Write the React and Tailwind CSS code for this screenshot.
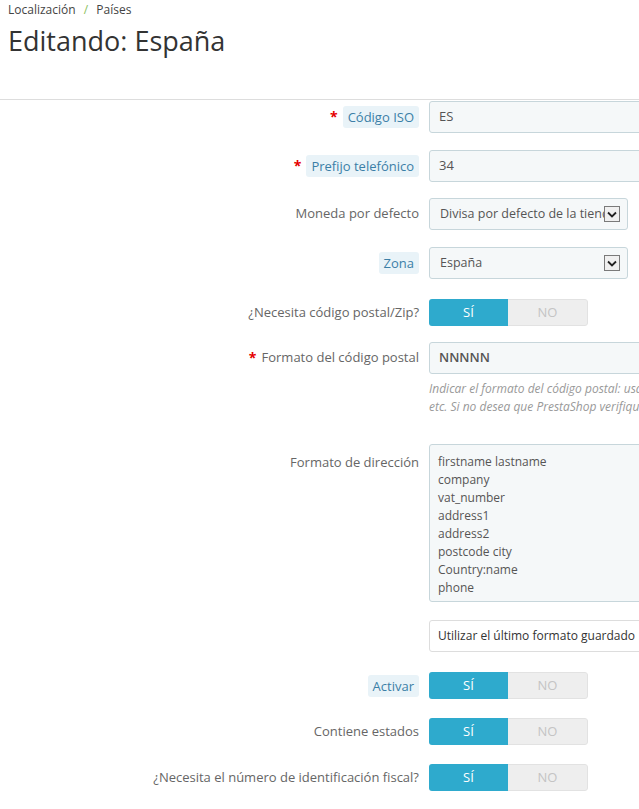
import { Fragment } from "react";

const font = { fontFamily: '"Open Sans", "Noto Sans", sans-serif' };

function Label({ children, required, tip }) {
    return (
        <div className="w-[419px] shrink-0 flex items-center justify-end text-[13px] text-[#666] pr-0">
            {required && <span className="text-[#e50000] mr-[5px] text-[14px] font-bold leading-none">*</span>}
            {tip ? (
                <span className="bg-[#e9f3f8] text-[#3b7fa7] px-[5px] py-[2px] rounded-[3px] leading-[18px]">{children}</span>
            ) : (
                <span>{children}</span>
            )}
        </div>
    );
}

function Row({ children, className }) {
    return <div className={"flex " + (className || "")}>{children}</div>;
}

function TextInput({ value, bold }) {
    return (
        <div className="ml-[10px] h-[32px] flex-1 -mr-[30px] bg-[#f5f8f9] border border-[#c7d6db] rounded-[3px] flex items-center px-[9px] text-[13px] text-[#555]">
            <span className={bold ? "font-semibold" : ""}>{value}</span>
        </div>
    );
}

function SelectBox({ value }) {
    return (
        <div className="ml-[10px] h-[32px] w-[199px] bg-[#f5f8f9] border border-[#c7d6db] rounded-[3px] flex items-center pl-[10px] pr-[7px] text-[12.5px] text-[#555]">
            <span className="flex-1 overflow-hidden whitespace-nowrap">{value}</span>
            <span className="w-[16px] h-[16px] shrink-0 border border-[#7a7a7a] bg-[#f0f0f0] flex items-center justify-center">
                <svg width="10" height="7" viewBox="0 0 10 7">
                    <path d="M1 1.5 L5 5.5 L9 1.5" fill="none" stroke="#222" strokeWidth="1.8" />
                </svg>
            </span>
        </div>
    );
}

function Toggle() {
    return (
        <div className="ml-[10px] h-[27px] w-[159px] flex rounded-[3px] overflow-hidden text-[13px]">
            <div className="w-[79px] bg-[#2eaacd] text-white flex items-center justify-center">SÍ</div>
            <div className="flex-1 bg-[#eeeeee] text-[#c4c4c4] flex items-center justify-center border-y border-r border-[#e2e2e2] rounded-r-[3px]">NO</div>
        </div>
    );
}

const addressLines = [
    "firstname lastname",
    "company",
    "vat_number",
    "address1",
    "address2",
    "postcode city",
    "Country:name",
    "phone",
];

export default function App() {
    return (
        <div className="w-[639px] h-[809px] overflow-hidden bg-white" style={font}>
            {/* Header */}
            <div className="px-[8px] pt-[1px]">
                <div className="text-[12px] text-[#444] leading-[18px]">
                    Localización <span className="text-[#8bbf5c] mx-[5px]">/</span> Países
                </div>
                <h1 className="text-[27px] text-[#333] leading-[36px] mt-[4px]">Editando: España</h1>
            </div>
            <div className="mt-[40px] border-t border-[#dddddd]" />

            {/* Form */}
            <div className="flex flex-col">
                <Row className="mt-[1px] items-center">
                    <Label required tip>Código ISO</Label>
                    <TextInput value="ES" />
                </Row>
                <Row className="mt-[17px] items-center">
                    <Label required tip>Prefijo telefónico</Label>
                    <TextInput value="34" />
                </Row>
                <Row className="mt-[16px] items-center">
                    <Label>Moneda por defecto</Label>
                    <SelectBox value="Divisa por defecto de la tienda" />
                </Row>
                <Row className="mt-[17px] items-center">
                    <Label tip>Zona</Label>
                    <SelectBox value="España" />
                </Row>
                <Row className="mt-[20px] items-center">
                    <Label>¿Necesita código postal/Zip?</Label>
                    <Toggle />
                </Row>
                <Row className="mt-[16px] items-center">
                    <Label required>Formato del código postal</Label>
                    <TextInput value="NNNNN" bold />
                </Row>
                <Row>
                    <div className="w-[419px] shrink-0" />
                    <div className="ml-[10px] mt-[6px] text-[12px] italic text-[#999] leading-[18px] whitespace-nowrap">
                        Indicar el formato del código postal: usar L para una letra, N para un número, y C para el código ISO del país,
                        <br />
                        etc. Si no desea que PrestaShop verifique el formato del código postal, deje este campo vacío.
                    </div>
                </Row>
                <Row className="mt-[28px]">
                    <div className="w-[419px] shrink-0 text-right text-[13px] text-[#666] pt-[9px]">Formato de dirección</div>
                    <div className="ml-[10px] flex-1 -mr-[30px] h-[158px] bg-[#f5f8f9] border border-[#c7d6db] rounded-[3px] px-[8px] pt-[8px] text-[12px] text-[#555] leading-[18px]">
                        {addressLines.map((l) => (
                            <Fragment key={l}>
                                <div>{l}</div>
                            </Fragment>
                        ))}
                    </div>
                </Row>
                <Row className="mt-[18px]">
                    <div className="w-[419px] shrink-0" />
                    <div className="ml-[10px] h-[32px] flex-1 -mr-[30px] bg-white border border-[#dddddd] rounded-[3px] flex items-center px-[8px] text-[12px] text-[#333] whitespace-nowrap">
                        Utilizar el último formato guardado
                    </div>
                </Row>
                <Row className="mt-[20px] items-center">
                    <Label tip>Activar</Label>
                    <Toggle />
                </Row>
                <Row className="mt-[19px] items-center">
                    <Label>Contiene estados</Label>
                    <Toggle />
                </Row>
                <Row className="mt-[19px] items-center">
                    <Label>¿Necesita el número de identificación fiscal?</Label>
                    <Toggle />
                </Row>
            </div>
        </div>
    );
}
